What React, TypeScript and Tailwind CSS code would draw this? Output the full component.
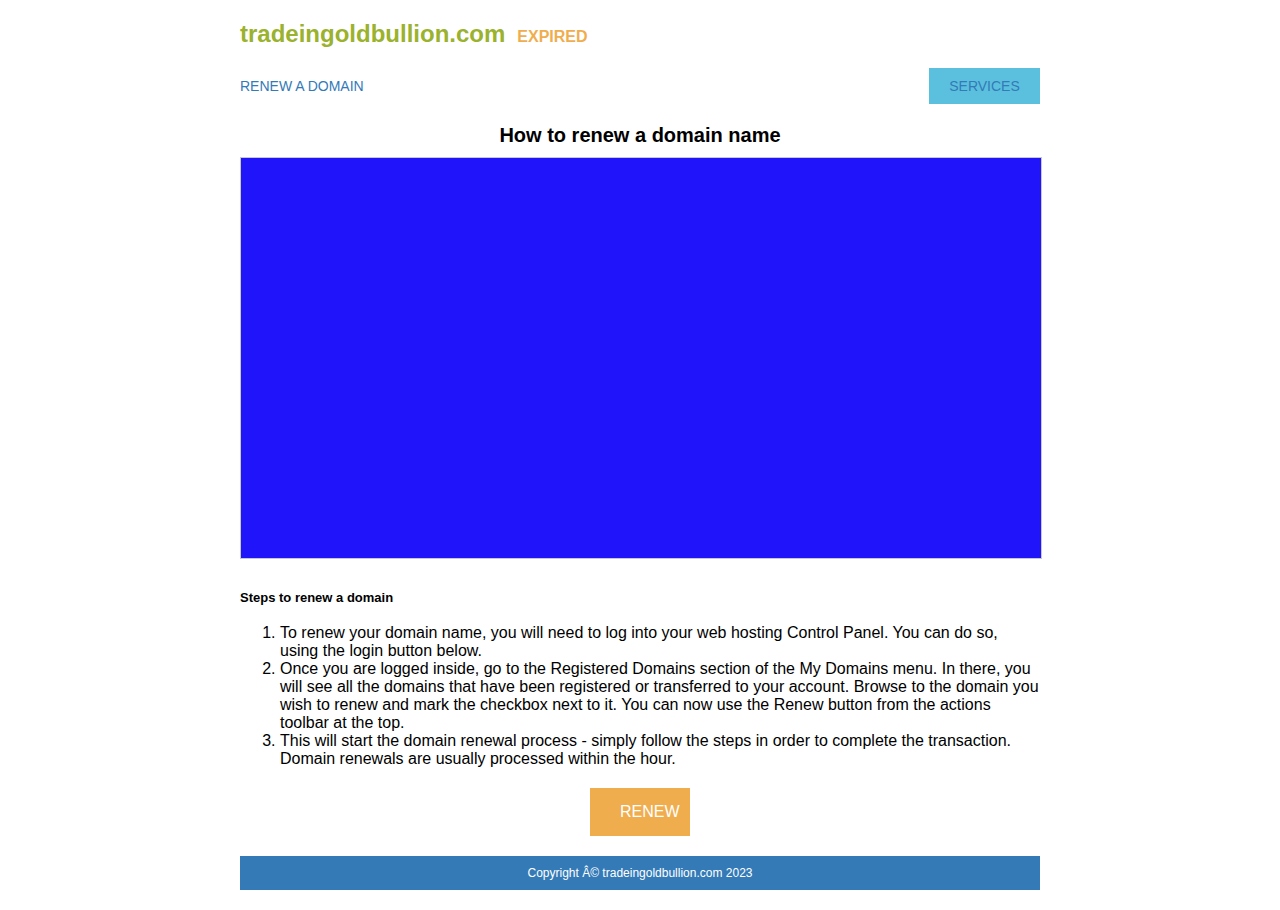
export default function App() {
  const font = { fontFamily: '"Liberation Sans", Arial, sans-serif' };
  return (
    <div className="min-h-[910px] bg-white text-black" style={font}>
      <div className="mx-auto w-[800px] pt-[19px]">
        <div className="flex items-baseline">
          <h1 className="text-[24px] leading-[30px] font-bold text-[#9ab22d]">tradeingoldbullion.com</h1>
          <span className="ml-3 text-[16px] font-bold text-[#f0ad4e]">EXPIRED</span>
        </div>
        <div className="mt-[19px] flex items-center justify-between">
          <a className="text-[14px] text-[#337ab7]">RENEW A DOMAIN</a>
          <a className="flex h-[36px] w-[111px] items-center justify-center bg-[#5bc0de] text-[14px] text-[#337ab7]">
            SERVICES
          </a>
        </div>
        <h2 className="mt-[20px] text-center text-[20px] leading-[22px] font-bold">How to renew a domain name</h2>
        <div className="mt-[11px] h-[402px] w-[802px] border border-[#c8c8c8] bg-[#1f14fa]" />
        <h4 className="mt-[31px] text-[13px] leading-[15px] font-bold">Steps to renew a domain</h4>
        <ol className="mt-[19px] list-decimal pl-[40px] text-[16px] leading-[18px]">
          <li>
            To renew your domain name, you will need to log into your web hosting Control Panel. You can do so,
            using the login button below.
          </li>
          <li>
            Once you are logged inside, go to the Registered Domains section of the My Domains menu. In there, you
            will see all the domains that have been registered or transferred to your account. Browse to the
            domain you wish to renew and mark the checkbox next to it. You can now use the Renew button from the
            actions toolbar at the top.
          </li>
          <li>
            This will start the domain renewal process - simply follow the steps in order to complete the
            transaction. Domain renewals are usually processed within the hour.
          </li>
        </ol>
        <div className="mt-[20px] flex justify-center">
          <a className="flex h-[48px] w-[100px] items-center bg-[#f0ad4e] pl-[30px] text-[16px] text-white">RENEW</a>
        </div>
        <div className="mt-[20px] flex h-[34px] items-center justify-center bg-[#337ab7] text-[12px] text-white">
          Copyright Â© tradeingoldbullion.com 2023
        </div>
      </div>
    </div>
  );
}
